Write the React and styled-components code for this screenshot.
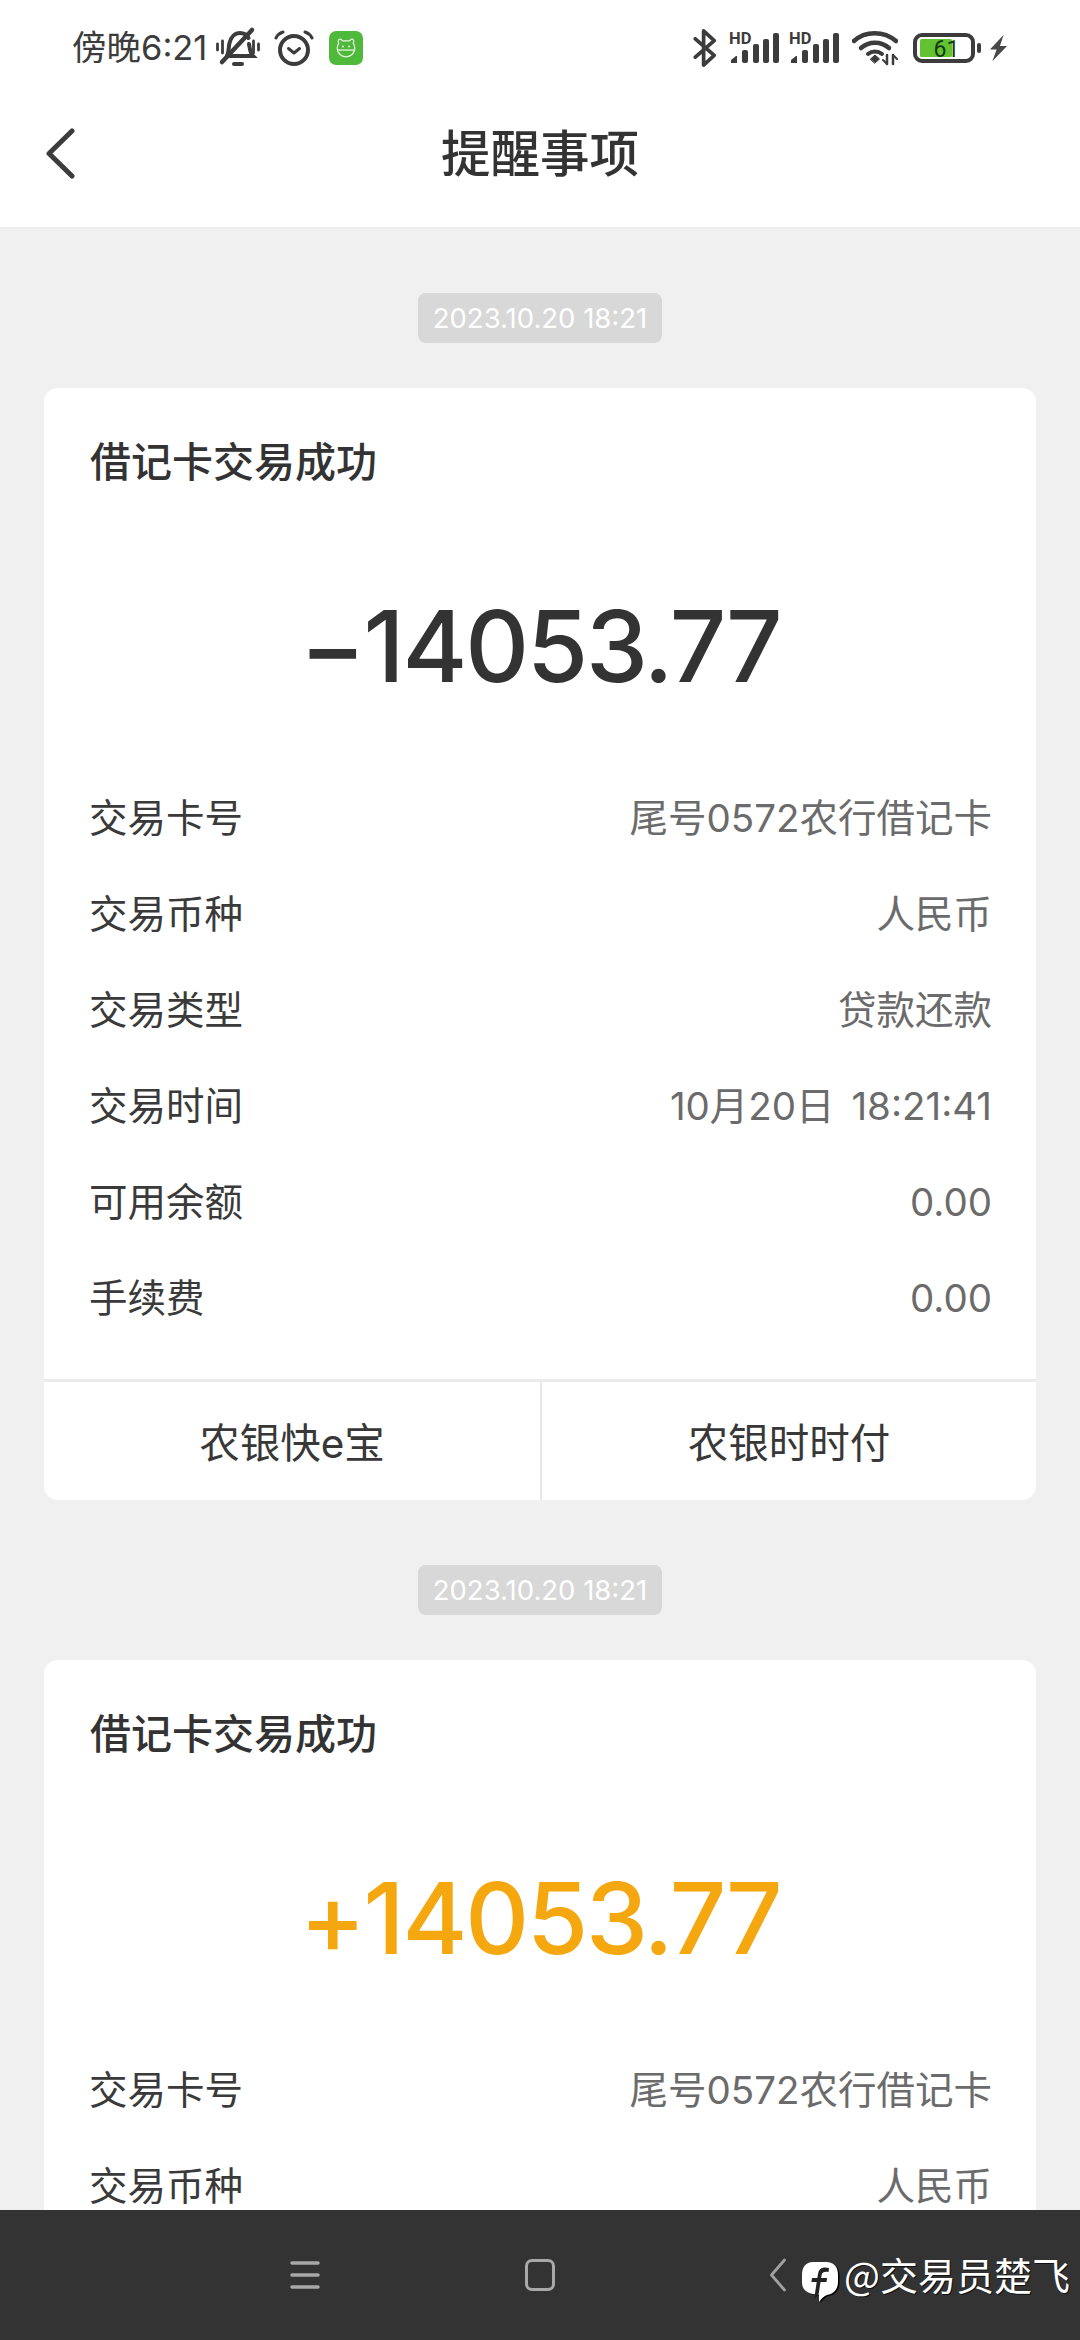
import React from "react";
import styled, { createGlobalStyle } from "styled-components";

const CJK = `"Noto Sans CJK SC", "Noto Sans", sans-serif`;
const LATIN = `Inter, "Noto Sans CJK SC", sans-serif`;

const GlobalStyle = createGlobalStyle`
  html, body {
    margin: 0;
    padding: 0;
    background: #f0f0f0;
  }
  * {
    box-sizing: border-box;
  }
`;

const Page = styled.div`
  width: 1080px;
  height: 2340px;
  display: flex;
  flex-direction: column;
  overflow: hidden;
  background: #f0f0f0;
  font-family: ${CJK};
`;

const Top = styled.div`
  height: 227px;
  flex: none;
  background: #fff;
  display: flex;
  flex-direction: column;
`;

const StatusBar = styled.div`
  height: 96px;
  flex: none;
  display: flex;
  align-items: center;
  justify-content: space-between;
  padding: 0 72px 0 72px;
  color: #3c3c3c;
`;

const StatusGroup = styled.div`
  display: flex;
  align-items: center;
`;

const Clock = styled.span`
  font-family: ${LATIN};
  font-size: 34.5px;
  line-height: 40px;
  margin-right: 9px;
`;

const Spacer = styled.span`
  flex: none;
  width: ${(p) => p.$w}px;
`;

const AppBar = styled.div`
  flex: 1;
  display: flex;
  align-items: center;
  justify-content: center;
  position: relative;
  padding-bottom: 22px;
`;

const BackButton = styled.svg`
  position: absolute;
  left: 44px;
  top: 32px;
`;

const Title = styled.h1`
  margin: 0;
  font-size: 49.5px;
  line-height: 60px;
  font-weight: 500;
  color: #333;
`;

const Feed = styled.div`
  flex: 1;
  min-height: 0;
  overflow: hidden;
  padding: 66px 44px 0;
  display: flex;
  flex-direction: column;
  align-items: stretch;
`;

const DatePill = styled.div`
  align-self: center;
  width: 244px;
  height: 50px;
  flex: none;
  border-radius: 8px;
  background: #d8d8d8;
  color: #fff;
  font-family: ${LATIN};
  font-size: 27.5px;
  line-height: 50px;
  text-align: center;
  margin-bottom: 45px;
`;

const Card = styled.section`
  flex: ${(p) => (p.$fill ? "1" : "none")};
  background: #fff;
  border-radius: ${(p) => (p.$fill ? "14px 14px 0 0" : "14px")};
  margin-bottom: ${(p) => (p.$fill ? "0" : "65px")};
  overflow: hidden;
`;

const CardTitle = styled.div`
  padding: 46px 46px 0;
  font-size: 41px;
  line-height: 50px;
  font-weight: 500;
  color: #333;
`;

const Amount = styled.div`
  margin-top: 102px;
  height: 120px;
  text-align: center;
  font-family: ${LATIN};
  font-size: 99px;
  font-weight: 500;
  letter-spacing: -2.2px;
  line-height: 120px;
  color: ${(p) => (p.$income ? "#f5a70f" : "#333")};
`;

const Rows = styled.div`
  margin-top: 61px;
  padding: 0 44px 0 45px;
`;

const Row = styled.div`
  height: 96px;
  line-height: 96px;
  display: flex;
  align-items: baseline;
  justify-content: space-between;
  font-size: 38.5px;
`;

const RowLabel = styled.span`
  color: #3a3a3a;
`;

const RowValue = styled.span`
  color: #6b6b6b;
  font-family: ${LATIN};
  font-size: 38.5px;
  word-spacing: 6px;
`;

const Actions = styled.div`
  margin-top: 36px;
  height: 121px;
  display: grid;
  grid-template-columns: 1fr 1fr;
  border-top: 3px solid #ebebeb;
`;

const Action = styled.div`
  display: flex;
  align-items: center;
  justify-content: center;
  font-size: 40.5px;
  padding-bottom: 2px;
  color: #383838;
  font-family: ${LATIN};
  & + & {
    border-left: 2px solid #e8e8e8;
  }
`;

const NavBar = styled.div`
  height: 130px;
  flex: none;
  background: #333;
  display: flex;
  align-items: center;
  position: relative;
  padding-left: 290px;
`;

const NavHome = styled.div`
  width: 30px;
  height: 32px;
  margin-left: 205px;
  border: 3.5px solid #a8a8a8;
  border-radius: 7px;
`;

const Watermark = styled.div`
  position: absolute;
  left: 768px;
  top: 39px;
  display: flex;
  align-items: center;
  color: #fff;
  font-size: 38px;
  line-height: 50px;
  white-space: nowrap;
  text-shadow: 1px 1px 0 #111;
`;

const LogoMark = styled.svg`
  margin-right: 4px;
  transform: translateY(8px);
`;

const NavChevron = styled.svg`
  margin-right: 14px;
  transform: translateY(1px);
`;

const BellOff = () => (
  <svg width="44" height="44" viewBox="0 0 44 44" fill="none" stroke="#3c3c3c" strokeWidth="4" strokeLinecap="round">
    <path d="M11 30c2-4 1.500-9 2.500-13C15 11 19 7 24 7c4 0 7 2 8.500 5" />
    <path d="M33 18c1 5 1 9 4 12H13" />
    <path d="M6 36 36 4" strokeWidth="4.500" />
    <path d="M18 38h8" strokeWidth="4" />
    <path d="M1.500 18v6M6.500 15v12M37.500 15v12M42.500 18v6" strokeWidth="2.800" />
  </svg>
);

const Alarm = () => (
  <svg width="40" height="38" viewBox="0 0 40 38" fill="none" stroke="#3c3c3c" strokeLinecap="round" strokeLinejoin="round" style={{ marginLeft: 14 }}>
    <circle cx="20" cy="21" r="14" strokeWidth="4" />
    <path d="M14.500 19.500 20 24l5.500-4.500" strokeWidth="3" />
    <path d="M2 9c1.500-3 4-5 7-6M38 9c-1.500-3-4-5-7-6" strokeWidth="3" />
  </svg>
);

const AppBadge = () => (
  <svg width="34" height="34" viewBox="0 0 33 33" style={{ marginLeft: 15 }}>
    <rect width="33" height="33" rx="7" fill="#4fb93c" />
    <g fill="none" stroke="#e9f8e4" strokeWidth="1.200">
      <path d="M9.500 12c-1-2-.5-4 1-4s2 1 3 1.500h6c1-.5 1.500-1.500 3-1.500s2 2 1 4c1 1 1.500 2.500 1.500 4.500 0 5-3.500 8.500-8.500 8.500s-8.500-3.500-8.500-8.500c0-2 .5-3.500 1.500-4.500z" />
      <path d="M8.500 18.500h16" />
    </g>
    <circle cx="13.500" cy="15" r="1" fill="#e9f8e4" />
    <circle cx="19.500" cy="15" r="1" fill="#e9f8e4" />
  </svg>
);

const Bluetooth = () => (
  <svg width="24" height="40" viewBox="0 0 26 42" fill="none" stroke="#3c3c3c" strokeWidth="4" strokeLinecap="round" strokeLinejoin="round">
    <path d="M2.500 11 23 29 11.500 39.500V2.500L23 13 2.500 31" />
  </svg>
);

const Signal = () => (
  <svg width="50" height="32" viewBox="0 -1 50 32" overflow="visible">
    <text x="0" y="11" fontFamily="Roboto, sans-serif" fontWeight="700" fontSize="16.500" fill="#3c3c3c">HD</text>
    <path d="M2 30v-3l5-4h1v7z" fill="#3c3c3c" />
    <rect x="13" y="17" width="6" height="13" rx="2" fill="#3c3c3c" />
    <rect x="24" y="11" width="6" height="19" rx="2" fill="#3c3c3c" />
    <rect x="34" y="6" width="6" height="24" rx="2" fill="#3c3c3c" />
    <rect x="44" y="0" width="6" height="30" rx="2" fill="#3c3c3c" />
  </svg>
);

const Wifi = () => (
  <svg width="46" height="36" viewBox="0 0 46 36" fill="none" stroke="#3c3c3c" strokeLinecap="round" style={{ marginLeft: 13 }}>
    <path d="M2 11C13 .5 32 .5 44 11" strokeWidth="4.500" />
    <path d="M9 18c8-7 20-7 28 0" strokeWidth="4.500" />
    <path d="M16 24c4-3.500 10-3.500 14 0" strokeWidth="4" />
    <path d="M18.500 29 23 25l4.500 4-4.500 4z" fill="#3c3c3c" strokeWidth="1" />
    <path d="M35 25v9M41 25v9" strokeWidth="2.500" />
    <path d="M31 30l4 4M41 25l4 4" strokeWidth="2" />
  </svg>
);

const Battery = () => (
  <svg width="68" height="30" viewBox="0 0 68 30" style={{ marginLeft: 15 }}>
    <rect x="2" y="2" width="58" height="26" rx="7" fill="none" stroke="#3c3c3c" strokeWidth="4" />
    <rect x="7" y="6" width="32" height="18" rx="1.500" fill="#62c232" />
    <text x="20.500" y="24" fontFamily="Roboto, sans-serif" fontSize="23" fill="#143a10">61</text>
    <rect x="64" y="10" width="4" height="10" rx="2" fill="#3c3c3c" />
  </svg>
);

const Bolt = () => (
  <svg width="19" height="30" viewBox="0 0 20 30" style={{ marginLeft: 8 }}>
    <path d="M15.500 1 1 16.500h7L3.500 29 19 13h-7.500z" fill="#484848" />
  </svg>
);

const NavMenu = () => (
  <svg width="30" height="30" viewBox="0 0 30 30" fill="none" stroke="#a8a8a8" strokeWidth="3.500" strokeLinecap="round">
    <path d="M2 3h26M2 15h26M2 27h26" />
  </svg>
);

const NavBack = () => (
  <NavChevron width="19" height="34" viewBox="0 0 18 34" fill="none" stroke="#a0a0a0" strokeWidth="2.800" strokeLinecap="round" strokeLinejoin="round">
    <path d="M16 2 3 17l13 15" />
  </NavChevron>
);

const bubble = "M12 1h13C33 1 37 6 37 14v7c0 7-4 12-11 13-3 1-5 3-8 7v-7C6 33 1 29 1 21v-7C1 6 5 1 12 1z";

const FeedLogo = () => (
  <LogoMark width="39" height="42" viewBox="0 0 39 42">
    <path d={bubble} fill="#000" transform="translate(1.500 1)" />
    <path d={bubble} fill="#fff" />
    <path d="M28 7c-6-1.500-10 0-11 6l-.7 4H11l-.6 4h5.300l-2.700 18 4.500-5 2-13h6l.6-4h-6l.5-3c.5-3 3-3.500 7-3z" fill="#222" />
  </LogoMark>
);

const rows = [
  ["交易卡号", "尾号0572农行借记卡"],
  ["交易币种", "人民币"],
  ["交易类型", "贷款还款"],
  ["交易时间", "10月20日 18:21:41"],
  ["可用余额", "0.00"],
  ["手续费", "0.00"],
];

// the last card runs under the nav bar, so only the rows above it are rendered
const Notice = ({ amount, income, partial }) => (
  <>
    <DatePill>2023.10.20 18:21</DatePill>
    <Card $fill={partial}>
      <CardTitle>借记卡交易成功</CardTitle>
      <Amount $income={income}>{amount}</Amount>
      <Rows>
        {(partial ? rows.slice(0, 2) : rows).map(([label, value]) => (
          <Row key={label}>
            <RowLabel>{label}</RowLabel>
            <RowValue>{value}</RowValue>
          </Row>
        ))}
      </Rows>
      {!partial && (
        <Actions>
          <Action>农银快e宝</Action>
          <Action>农银时时付</Action>
        </Actions>
      )}
    </Card>
  </>
);

export default function App() {
  return (
    <Page>
      <GlobalStyle />
      <Top>
        <StatusBar>
          <StatusGroup>
            <Clock>傍晚6:21</Clock>
            <BellOff />
            <Alarm />
            <AppBadge />
          </StatusGroup>
          <StatusGroup>
            <Bluetooth />
            <Spacer $w={12} />
            <Signal />
            <Spacer $w={10} />
            <Signal />
            <Wifi />
            <Battery />
            <Bolt />
          </StatusGroup>
        </StatusBar>
        <AppBar>
          <BackButton width="32" height="52" viewBox="0 0 32 52" fill="none" stroke="#3c3c3c" strokeWidth="5" strokeLinecap="round" strokeLinejoin="round">
            <path d="M28 3 5 25.500 28 48" />
          </BackButton>
          <Title>提醒事项</Title>
        </AppBar>
      </Top>
      <Feed>
        <Notice amount="−14053.77" />
        <Notice amount="+14053.77" income partial />
      </Feed>
      <NavBar>
        <NavMenu />
        <NavHome />
        <Watermark>
          <NavBack />
          <FeedLogo />
          @交易员楚飞
        </Watermark>
      </NavBar>
    </Page>
  );
}
